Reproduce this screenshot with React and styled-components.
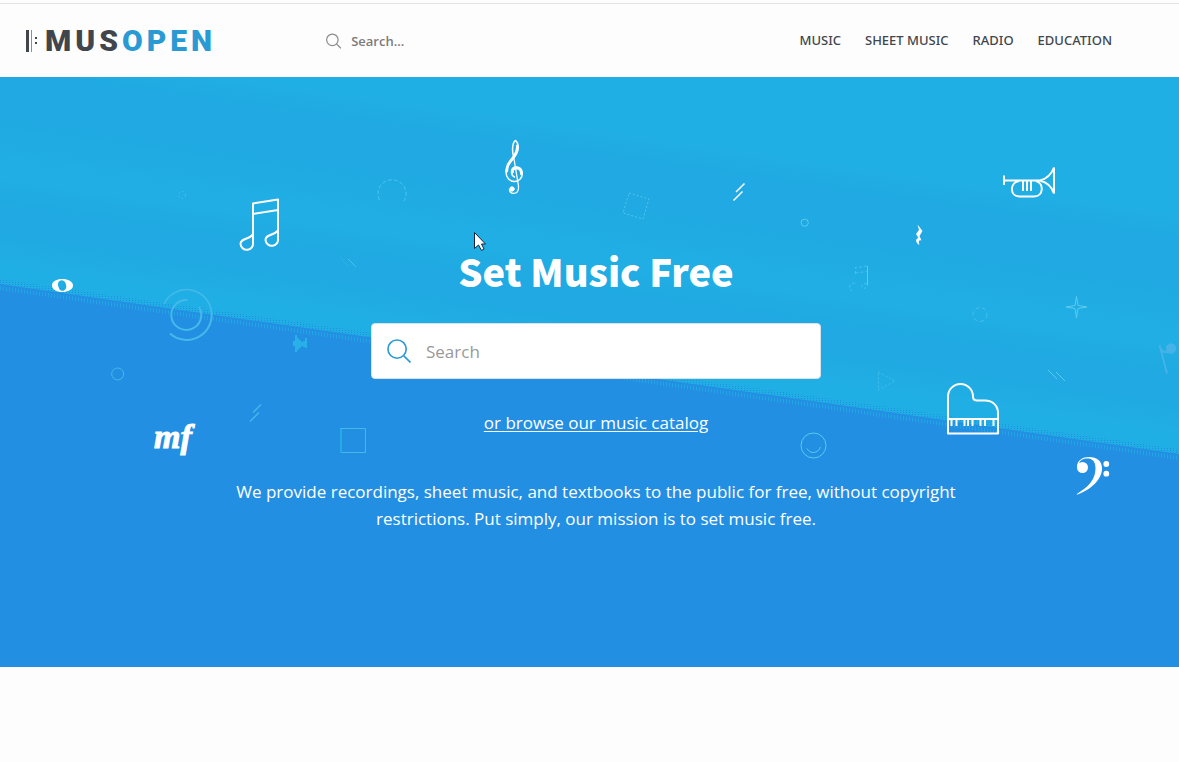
import React from 'react';
import styled, { createGlobalStyle } from 'styled-components';

const GlobalStyle = createGlobalStyle`
  * {
    box-sizing: border-box;
  }

  body {
    margin: 0;
    background: #fdfdfd;
    color: #41464d;
    font-family: 'Open Sans', 'Noto Sans', sans-serif;
  }
`;

const Header = styled.header`
  display: flex;
  align-items: center;
  height: 74px;
  margin-top: 3px;
  padding: 0 67px 0 26px;
  border-top: 1px solid #e3e3e3;
  background: #fdfdfd;
`;

const Logo = styled.a`
  display: flex;
  flex-shrink: 0;
  align-items: center;
  gap: 6px;
  width: 192px;
  color: #41464d;
  font-family: Roboto, sans-serif;
  font-size: 30px;
  font-weight: 900;
  line-height: 36px;
  letter-spacing: 4px;
  text-decoration: none;

  svg {
    flex-shrink: 0;
  }
`;

const LogoAccent = styled.span`
  color: #2a9ad4;
`;

const HeaderSearch = styled.label`
  display: flex;
  flex: 1;
  align-items: center;
  gap: 10px;
  margin-left: 108px;
`;

const HeaderInput = styled.input`
  width: 100%;
  padding: 0;
  border: 0;
  outline: 0;
  background: transparent;
  color: #41464d;
  font: 600 13px/20px 'Open Sans', sans-serif;

  &::placeholder {
    color: #7b7b7b;
    opacity: 1;
  }
`;

const Nav = styled.nav`
  display: flex;
  gap: 24px;
  padding-bottom: 2px;
`;

const NavLink = styled.a`
  color: #41464d;
  font-family: 'Noto Sans', 'Open Sans', sans-serif;
  font-size: 13px;
  font-weight: 500;
  line-height: 20px;
  text-decoration: none;
`;

const Hero = styled.main`
  position: relative;
  min-height: 590px;
  padding: 168px 16px 134px 29px;
  background: #228fe3;
  color: #fff;
`;

const Scene = styled.svg`
  position: absolute;
  inset: 0;
  width: 100%;
  height: 100%;
`;

const HeroContent = styled.div`
  position: relative;
  display: flex;
  flex-direction: column;
  align-items: center;
  text-align: center;
`;

const Title = styled.h1`
  margin: 0 0 26px;
  font-family: 'Noto Sans CJK SC', sans-serif;
  font-size: 38px;
  font-weight: 900;
  line-height: 52px;
`;

const SearchBox = styled.label`
  display: flex;
  align-items: center;
  gap: 15px;
  width: 100%;
  max-width: 450px;
  height: 56px;
  padding: 0 15px;
  border: 1px solid #d9e2e8;
  border-radius: 4px;
  background: #fff;
`;

const SearchInput = styled.input`
  flex: 1;
  min-width: 0;
  padding: 0;
  border: 0;
  outline: 0;
  background: transparent;
  color: #41464d;
  font: 400 17px/27px 'Open Sans', sans-serif;

  &::placeholder {
    color: #999;
    opacity: 1;
  }
`;

const BrowseLink = styled.a`
  margin-top: 30px;
  color: #fff;
  font-size: 17px;
  line-height: 27px;
  text-underline-offset: 2px;
`;

const Mission = styled.p`
  max-width: 740px;
  margin: 42px 0 0;
  font-size: 17px;
  line-height: 27px;
`;

const navItems = ['Music', 'Sheet music', 'Radio', 'Education'];

const RepeatMark = () => (
  <svg width="13" height="22" viewBox="0 0 13 22" aria-hidden="true">
    <path d="M0 0h3v22H0z" fill="#41464d" />
    <path d="M5 0h1v22H5z" fill="#8b8e92" />
    <path d="M9 7h2v2H9zM9 12h2v2H9z" fill="#41464d" />
  </svg>
);

const SearchIcon = ({ size, color, stroke }) => (
  <svg width={size} height={size} viewBox="0 0 25 25" fill="none" stroke={color} strokeWidth={stroke} aria-hidden="true">
    <circle cx="10.5" cy="10.5" r="9.5" />
    <path d="M17.5 17.5L24.5 24.5" />
  </svg>
);

// Line drawings scattered over the slanted two-tone background
const HeroScene = () => (
  <Scene viewBox="0 77 1179 590" preserveAspectRatio="xMidYMid slice" fill="none" aria-hidden="true">
    <defs>
      <linearGradient id="sky" gradientUnits="userSpaceOnUse" x1="0" y1="-93" x2="-83" y2="485">
        <stop offset="0.23" stopColor="#20afe5" />
        <stop offset="0.28" stopColor="#20a9e2" />
        <stop offset="0.35" stopColor="#20a9e2" />
        <stop offset="0.43" stopColor="#20aee4" />
        <stop offset="0.46" stopColor="#20aee4" />
        <stop offset="0.51" stopColor="#20a9e2" />
        <stop offset="0.55" stopColor="#20a9e2" />
        <stop offset="0.61" stopColor="#20afe5" />
      </linearGradient>
      <pattern id="blueDots" width="3" height="2" patternUnits="userSpaceOnUse">
        <path d="M0 0h1v1H0z" fill="#228fe3" />
      </pattern>
      <pattern id="skyDots" width="3" height="2" patternUnits="userSpaceOnUse">
        <path d="M0 0h1v2H0z" fill="#20a6e3" />
      </pattern>
    </defs>

    <path d="M0 77H1179V454L0 284z" fill="url(#sky)" />
    <path d="M0 279L1179 449V454L0 284z" fill="url(#blueDots)" />
    <path d="M0 286L1179 456V460L0 290z" fill="url(#skyDots)" />

    <g stroke="#5ccbf0" strokeWidth="1">
      <circle cx="182" cy="195" r="3.5" strokeDasharray="2 2" opacity="0.5" />
      <path d="M379.500 200A14 14 0 1 1 404 201" strokeDasharray="4 2" opacity="0.75" />
      <path d="M629 193L649 199L643 219L623 213z" strokeDasharray="2 2" opacity="0.8" />
      <circle cx="804.7" cy="222.7" r="3.6" />
      <path d="M348 259L356 267" opacity="0.7" />
      <path d="M340 257L348 266" opacity="0.25" />
      <path d="M867.5 266V285" />
      <path d="M855.5 274V267.500L867 266M855.500 273L867 271.500M855 283C850 283 849 286 849.500 289L852 291M867 284C862 282 861 286 862 288C865 289 867 288 867 285" strokeDasharray="3 2" opacity="0.6" />
      <circle cx="980" cy="314.5" r="7" strokeDasharray="4 3" opacity="0.6" />
      <path d="M1076.500 296.500L1078 305.500L1087 307L1078 308.500L1076.500 318L1075 308.500L1066 307L1075 305.500z" />
      <path d="M878.500 372L895 381L878.500 390z" strokeDasharray="2 2" opacity="0.6" />
      <path d="M1048 370L1057 379M1056 372L1065 381" />
      <circle cx="813.5" cy="445.500" r="12.5" />
      <path d="M807 448.500C809.500 454 818 454 820.500 447" />
    </g>

    <g stroke="#45baea">
      <path d="M164 304A25 25 0 0 1 211 309" strokeWidth="1.500" />
      <path d="M211 309A25 25 0 0 1 170 333.500" strokeWidth="2" />
      <path d="M187.500 300A15 15 0 1 0 199 307" strokeWidth="2" />
      <circle cx="117.700" cy="374" r="6" />
      <path d="M253 412.500L261 404.500M250 421.500L259 412.500" strokeWidth="1.300" />
      <path d="M340.500 428.500H365.500V452.500H340.500z" />
    </g>
    <path d="M341 429V453" stroke="#20aee5" strokeWidth="2" />
    <path d="M293 341h2v5h-2zM295 335h2v17h-2zM297 338h2v12h-2zM299 340h2v8h-2zM301 342h3v4h-3zM303 341h2v6h-2zM305 338h2v10h-2z" fill="#28b0e8" />
    <g stroke="#45b3e8">
      <circle cx="1171" cy="348.500" r="4.800" fill="#45b3e8" />
      <path d="M1159.500 345L1167 373.500M1160 348L1164 352H1171" strokeWidth="1.800" />
    </g>

    {/* beamed notes */}
    <path
      d="M253 235V203.500L278 199.500V238.500A6.300 6.300 0 1 1 265.500 240C265.500 234 273.500 236 278 230.500M253 214L278 210M253 234V242.500A6.300 6.300 0 1 1 240.500 244C240.500 238 248.500 240 253 234.500"
      stroke="#fff"
      strokeWidth="2"
      strokeLinejoin="round"
    />

    {/* whole note */}
    <path
      fillRule="evenodd"
      d="M62.300 279C68 279 73 281.500 73 285.500S68 292 62.300 292S52 289.500 52 285.500S56.500 279 62.300 279zM61 280.500C58 281 57.500 284 58.500 287C59.500 290.500 62 291.500 64 290.500C67 289 66.500 285.500 65.500 283C64.500 281 62.500 280 61 280.500z"
      fill="#fff"
    />

    {/* treble clef */}
    <g stroke="#fff" strokeLinecap="round">
      <path d="M513.500 156C511.500 149 513 141.500 515.700 140.500C518.500 143 519 149 516.500 154C513.500 160 506 164 506 172C506 178 510 181.500 514.500 181.500C519.500 181.500 522.300 177.500 522.300 173.500C522.300 169 519.500 167 516.500 167C513 167 511.500 169.500 511.500 172C511.500 174.500 512.500 176 514.500 177" strokeWidth="1.500" />
      <path d="M517.300 146C518 151 515 155 512.500 158.500C509 163 507 165 506.800 171" strokeWidth="2.800" />
      <path d="M512.500 172C512 169 514 168 517 168C520 168 521.500 171 521.500 174" strokeWidth="2.800" />
      <path d="M513.500 156L518.500 186C519 191 517 193.300 513.500 193.300C511 193.300 509.500 191.500 509.500 189.500" strokeWidth="1.300" />
      <circle cx="512" cy="189" r="2.200" fill="#fff" />
    </g>

    <path d="M744.500 183.500L736 192M742.500 191.500L733.500 200.500" stroke="#fff" strokeWidth="1.500" />

    {/* trumpet */}
    <path
      d="M1004 175.500V185M1004 180.500H1040C1046 179 1051.500 174 1054 167.500V193.500C1051.500 186 1046 182 1040 180.500M1019 181C1009 183 1010 196.500 1019.500 196.500H1034C1044 196.500 1044 183 1036 181M1023 181V191M1027 181V191M1031 181V191"
      stroke="#fff"
      strokeWidth="2"
    />

    {/* quarter rest */}
    <path d="M917.500 224.500L922.500 231L919.500 236L921.500 240.500C919 239.500 918 241.500 919.500 245C916 243 914.500 239 918.500 238L916 234L919 230z" fill="#fff" />

    {/* grand piano */}
    <path
      d="M948 433.500V396.500A12.500 12.500 0 0 1 973 396.500C973 399 974.500 400.500 977 400.500H985C993 400.500 998 406 998 413V433.500zM948 419H998"
      stroke="#fff"
      strokeWidth="2"
      strokeLinejoin="round"
    />
    <path d="M951.500 419V426M956.500 419V426M964.500 419V426M968 419V426M972.500 419V426M980.500 419V426M985 419V426M993.500 419V426" stroke="#fff" strokeWidth="2" />

    {/* bass clef */}
    <g fill="#fff">
      <path d="M1077 467C1077 460 1083 457 1089 457C1097 457 1102 461 1102 468.500C1102 480 1090 490 1077 494.800L1076.800 494C1088 487 1095.500 480 1095.500 468.500C1095.500 461 1092 458.600 1087.500 458.600C1083 458.600 1080 460 1079 464z" />
      <circle cx="1082.500" cy="467.500" r="5.500" />
      <circle cx="1106.300" cy="464" r="2.900" />
      <circle cx="1106.300" cy="473.700" r="2.900" />
    </g>

    <text x="154" y="448" fill="#fff" stroke="#fff" fontFamily="'Liberation Serif', serif" fontSize="34" fontWeight="700" fontStyle="italic">
      mf
    </text>

    {/* pointer */}
    <path d="M474.500 232.500V248.500L478.500 245L481.500 250.500L484 249L481.500 244H485.500z" fill="#fff" stroke="#10243a" />
  </Scene>
);

const App = () => (
  <>
    <GlobalStyle />
    <Header>
      <Logo href="#" aria-label="Musopen">
        <RepeatMark />
        <span>
          MUS<LogoAccent>OPEN</LogoAccent>
        </span>
      </Logo>
      <HeaderSearch>
        <SearchIcon size={16} color="#8c8c8c" stroke={2} />
        <HeaderInput type="search" placeholder="Search..." aria-label="Search the site" />
      </HeaderSearch>
      <Nav>
        {navItems.map(item => (
          <NavLink key={item} href="#">
            {item.toUpperCase()}
          </NavLink>
        ))}
      </Nav>
    </Header>
    <Hero>
      <HeroScene />
      <HeroContent>
        <Title>Set Music Free</Title>
        <SearchBox>
          <SearchIcon size={24} color="#2a9ad4" stroke={1.7} />
          <SearchInput type="search" placeholder="Search" aria-label="Search music" />
        </SearchBox>
        <BrowseLink href="#">or browse our music catalog</BrowseLink>
        <Mission>
          We provide recordings, sheet music, and textbooks to the public for free, without copyright restrictions. Put
          simply, our mission is to set music free.
        </Mission>
      </HeroContent>
    </Hero>
  </>
);

export default App;
